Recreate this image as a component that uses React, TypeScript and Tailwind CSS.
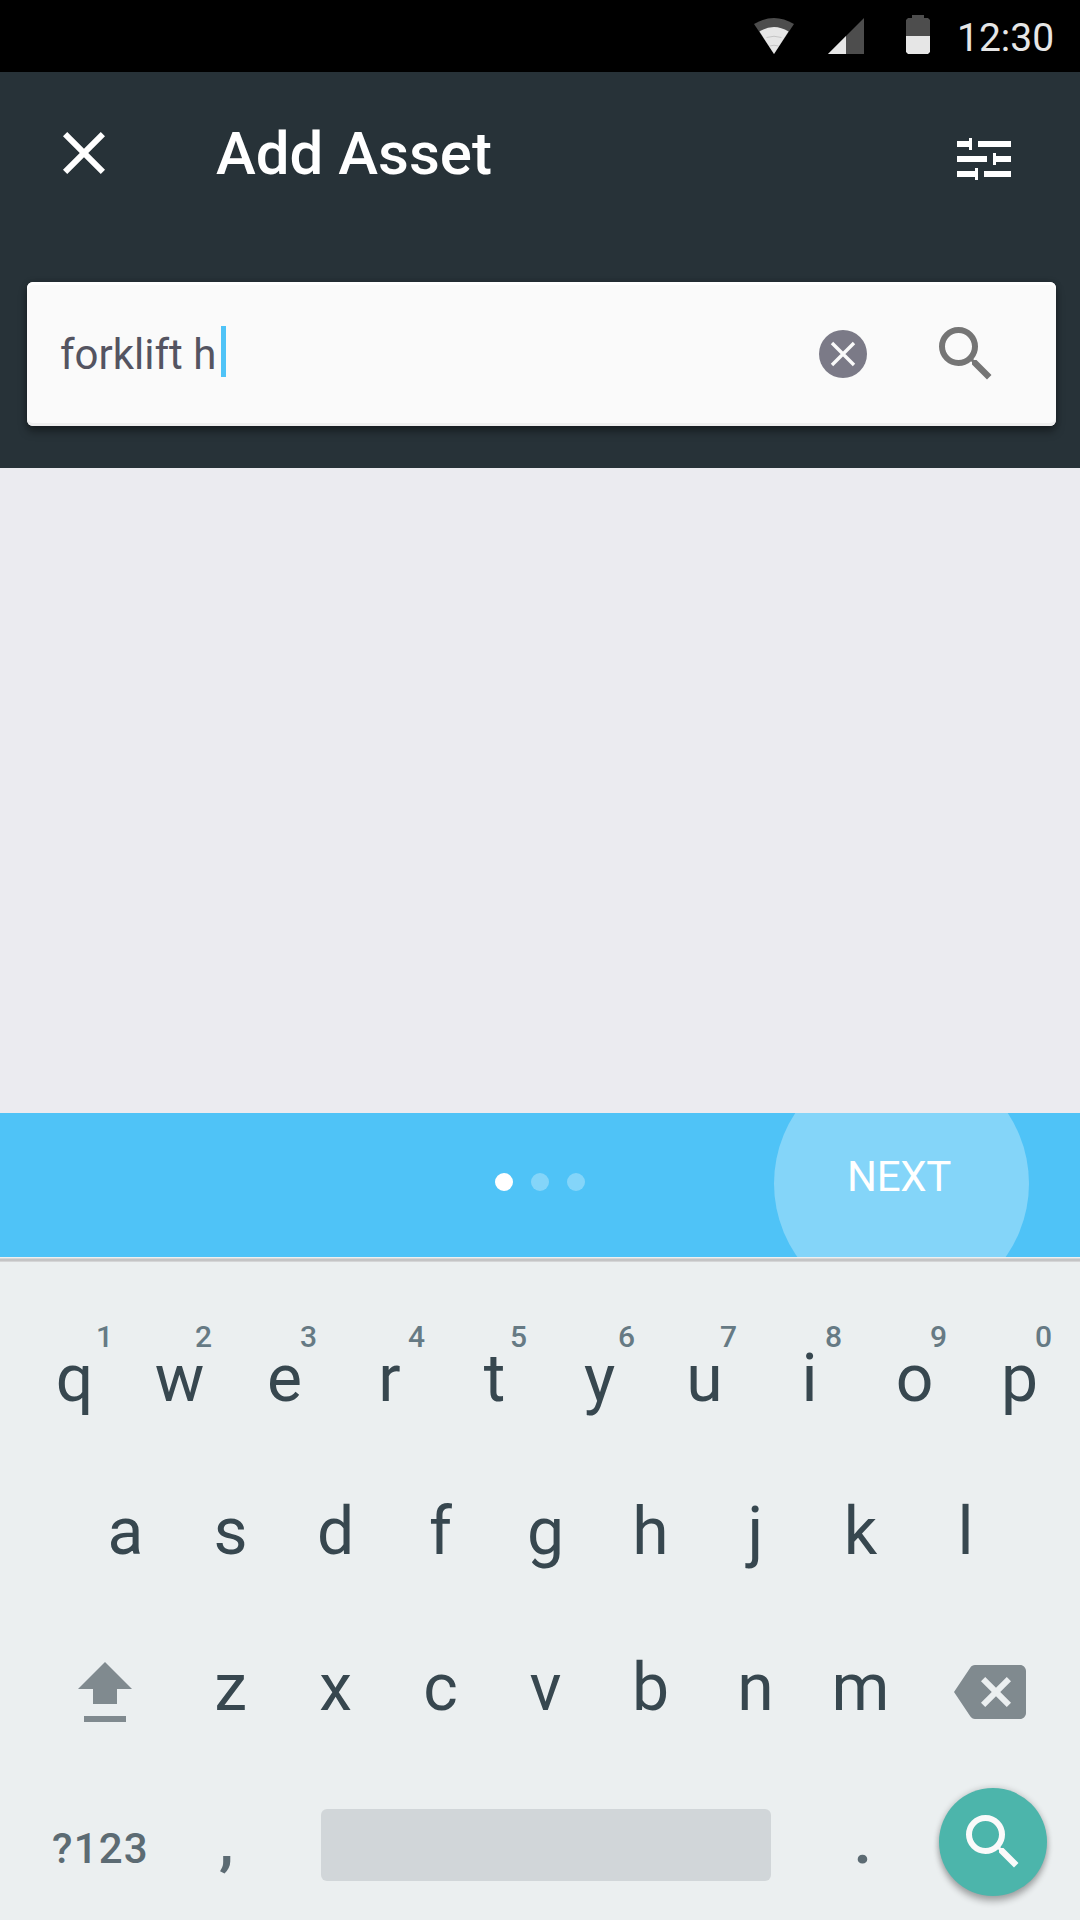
import React from "react";

const SEARCH_PATH =
  "M15.5 14h-.79l-.28-.27A6.471 6.471 0 0 0 16 9.5 6.5 6.5 0 1 0 9.5 16c1.61 0 3.09-.59 4.23-1.57l.27.28v.79l5 4.99L20.49 19l-4.99-5zm-6 0C7.01 14 5 11.99 5 9.5S7.01 5 9.5 5 14 7.01 14 9.5 11.99 14 9.5 14z";
const CLOSE_PATH =
  "M19 6.41L17.59 5 12 10.59 6.41 5 5 6.41 10.59 12 5 17.59 6.41 19 12 13.41 17.59 19 19 17.59 13.41 12z";
const BACKSPACE_PATH =
  "M22 3H7c-.69 0-1.23.35-1.59.88L0 12l5.41 8.11c.36.53.9.89 1.59.89h15c1.1 0 2-.9 2-2V5c0-1.1-.9-2-2-2zm-3 12.59L17.59 17 14 13.41 10.41 17 9 15.59 12.59 12 9 8.41 10.41 7 14 10.59 17.59 7 19 8.41 15.41 12 19 15.59z";

function Icon({ d, className }: { d: string; className: string }) {
  return (
    <svg viewBox="0 0 24 24" fill="currentColor" className={`size-[72px] shrink-0 ${className}`}>
      <path d={d} />
    </svg>
  );
}

function StatusBar() {
  return (
    <div className="flex h-[72px] items-start bg-black pl-[754px]">
      <svg viewBox="0 0 40 36" className="mt-[18px] h-9 w-10">
        <path d="M0 6Q20 -6 40 6L20 36Z" fill="#4d4d4d" />
        <path d="M5.5 13.5Q20 4.500 34.500 13.500L20 36Z" fill="#e6e6e6" />
        <path d="M12.500 19.500Q20 17 27.500 19.500M15.500 28Q20 26.500 24.500 28" fill="none" stroke="#bcbcbc" strokeWidth="0.8" />
      </svg>
      <svg viewBox="0 0 36 36" className="mt-[18px] ml-[34px] size-9">
        <path d="M36 0V36H0Z" fill="#4d4d4d" />
        <path d="M18 18V36H0Z" fill="#e6e6e6" />
      </svg>
      <svg viewBox="0 0 24 39" className="mt-[15px] ml-[42px] h-[39px] w-6">
        <path d="M6 0H18V3H22L24 5V21H0V5L2 3H6Z" fill="#4d4d4d" />
        <path d="M0 21H24V37L22 39H2L0 37Z" fill="#e6e6e6" />
      </svg>
      <span className="ml-[27px] text-[39px] leading-[77px] text-[#e6e6e6]">12:30</span>
    </div>
  );
}

function Header() {
  return (
    <header className="h-[396px] bg-[#273238] pt-[45px]">
      <div className="flex h-[165px] items-start pl-12">
        <Icon d={CLOSE_PATH} className="text-white" />
        <h1 className="ml-24 w-[741px] text-[60px] leading-[73px] font-medium text-white">Add Asset</h1>
        <svg viewBox="0 0 54 42" fill="white" className="mt-[21px] h-[42px] w-[54px]">
          <path d="M0 3H12V0H15V12H12V9H0ZM21 3H54V9H21ZM0 18H30V24H0ZM36 15H39V18H54V24H39V27H36ZM0 33H18V30H21V42H18V39H0ZM27 33H54V39H27Z" />
        </svg>
      </div>
      <div className="ml-[27px] flex h-36 w-[1029px] items-center rounded-md bg-[#fafafa] pl-[33px] shadow-[0_6px_9px_rgba(0,0,0,0.35),0_0_6px_rgba(0,0,0,0.2),inset_0_3px_0_#ffffff,inset_0_-3px_0_#eeeeee]">
        <span className="w-[161px] pt-0.5 text-[42px] leading-[142px] whitespace-nowrap text-[#545461]">forklift h</span>
        <span className="mb-[5px] h-[51px] w-[5px] bg-[#4fc3f7]" />
        <svg viewBox="0 0 48 48" className="ml-[593px] size-12">
          <circle cx="24" cy="24" r="24" fill="#7b7a87" />
          <path d="M13 13L35 35M35 13L13 35" stroke="#fafafa" strokeWidth="3.400" />
        </svg>
        <Icon d={SEARCH_PATH} className="ml-[63px] text-[#757575]" />
      </div>
    </header>
  );
}

function Pager() {
  return (
    <div className="relative flex h-36 items-center overflow-hidden bg-[#4fc3f7] pl-[495px]">
      <div className="absolute top-[-57px] left-[774px] size-[255px] rounded-full bg-white/30" />
      <div className="flex w-[352px] gap-[18px] pb-[6px]">
        <span className="size-[18px] rounded-full bg-white" />
        <span className="size-[18px] rounded-full bg-white/30" />
        <span className="size-[18px] rounded-full bg-white/30" />
      </div>
      <span className="relative mb-[17px] text-[42px] leading-none tracking-[-0.3px] text-white">NEXT</span>
    </div>
  );
}

const HINT_NUDGE: Record<string, string> = {
  "1": "left-[74px]",
  "4": "left-[71px]",
  "6": "left-[71px]",
};

function Key({ label, hint }: { label: string; hint?: string }) {
  return (
    <div className="relative w-[105px] text-center text-[66px] leading-[153px] text-[#37474f]">
      {label}
      {hint && (
        <span
          className={`absolute top-[17px] text-[30px] leading-[35px] font-medium text-[#667a84] ${HINT_NUDGE[hint] ?? "left-[68px]"}`}
        >
          {hint}
        </span>
      )}
    </div>
  );
}

function Keyboard() {
  return (
    <div className="h-[663px] bg-[#ebeff0]">
      <div className="h-px bg-[#eff0f0]" />
      <div className="h-px bg-[#d6d7d7]" />
      <div className="h-[2px] bg-[#c4c4c5]" />
      <div className="h-px bg-[#d4d5d6]" />
      <div className="mt-10 flex h-[153px] pl-[22px]">
        {"qwertyuiop".split("").map((c, i) => (
          <Key key={c} label={c} hint={"1234567890"[i]} />
        ))}
      </div>
      <div className="flex h-[153px] pl-[73px]">
        {"asdfghjkl".split("").map((c) => (
          <Key key={c} label={c} />
        ))}
      </div>
      <div className="mt-[3px] flex h-[153px] pl-[78px]">
        <svg viewBox="0 0 54 60" fill="#808a8f" className="mt-[51px] mr-[46px] h-[60px] w-[54px]">
          <path d="M27 0L54 27H39V42H15V27H0ZM6 54H48V60H6Z" />
        </svg>
        {"zxcvbnm".split("").map((c) => (
          <Key key={c} label={c} />
        ))}
        <Icon d={BACKSPACE_PATH} className="mt-[45px] ml-[41px] text-[#808a8f]" />
      </div>
      <div className="flex h-[156px] items-start pl-[52px] font-medium text-[#5c6b73]">
        <span className="w-[167px] text-[42px] leading-[169px] tracking-[1.2px]">?123</span>
        <span className="w-[102px] text-[60px] leading-[158px] font-bold">,</span>
        <div className="mt-[45px] h-[72px] w-[450px] rounded-md bg-[#d1d6d9]" />
        <span className="w-[168px] pl-[83px] text-[60px] leading-[158px] font-bold">.</span>
        <button className="mt-6 flex size-[108px] items-center justify-center rounded-full bg-[#4cb5ab] shadow-[0_6px_6px_rgba(0,0,0,0.24),0_0_6px_rgba(0,0,0,0.2)]">
          <Icon d={SEARCH_PATH} className="text-[#fafafa]" />
        </button>
      </div>
    </div>
  );
}

export default function App() {
  return (
    <div className="h-[1920px] w-[1080px] overflow-hidden bg-[#ebebf0] font-[Roboto,sans-serif]">
      <StatusBar />
      <Header />
      <main className="h-[645px]" />
      <Pager />
      <Keyboard />
    </div>
  );
}
